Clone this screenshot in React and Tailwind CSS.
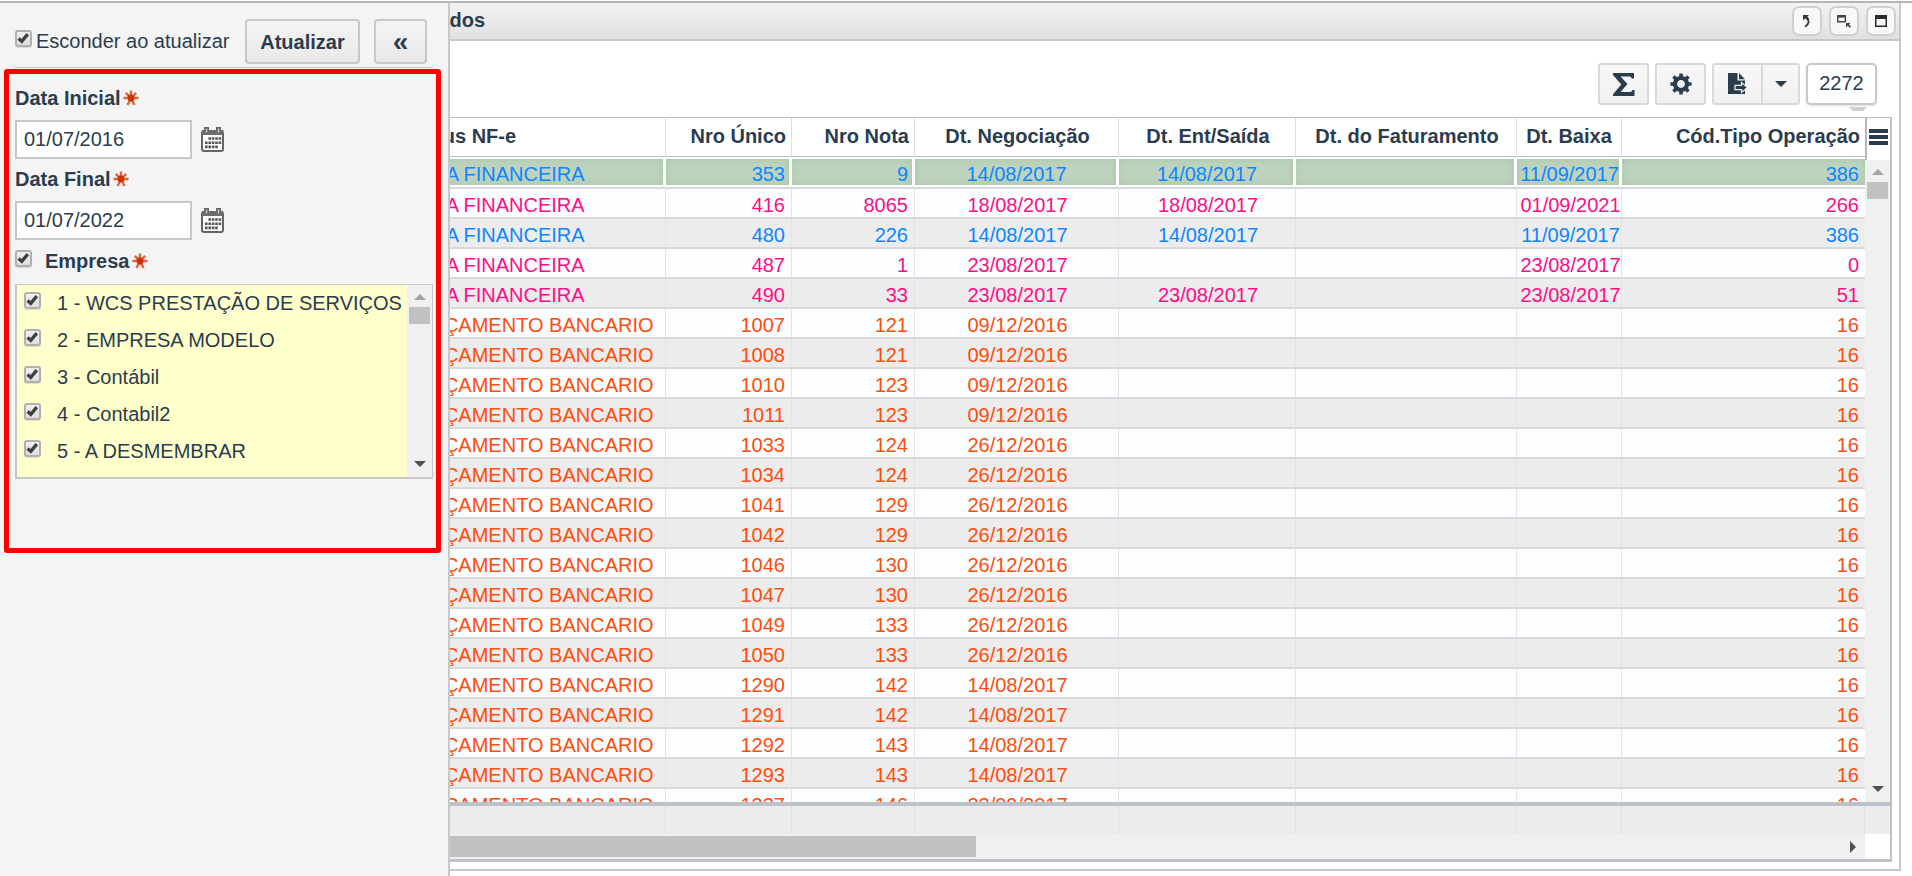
import React from "react";

const TONES = {
  blue: "text-[#0d86ff]",
  pink: "text-[#ff0d86]",
  orange: "text-[#ff4d0d]",
};

const NF = "NOTA FINANCEIRA";
const LB = "LANÇAMENTO BANCARIO";

const ROWS = [
  ["blue", NF, "353", "9", "14/08/2017", "14/08/2017", "", "11/09/2017", "386"],
  ["pink", NF, "416", "8065", "18/08/2017", "18/08/2017", "", "01/09/2021", "266"],
  ["blue", NF, "480", "226", "14/08/2017", "14/08/2017", "", "11/09/2017", "386"],
  ["pink", NF, "487", "1", "23/08/2017", "", "", "23/08/2017", "0"],
  ["pink", NF, "490", "33", "23/08/2017", "23/08/2017", "", "23/08/2017", "51"],
  ["orange", LB, "1007", "121", "09/12/2016", "", "", "", "16"],
  ["orange", LB, "1008", "121", "09/12/2016", "", "", "", "16"],
  ["orange", LB, "1010", "123", "09/12/2016", "", "", "", "16"],
  ["orange", LB, "1011", "123", "09/12/2016", "", "", "", "16"],
  ["orange", LB, "1033", "124", "26/12/2016", "", "", "", "16"],
  ["orange", LB, "1034", "124", "26/12/2016", "", "", "", "16"],
  ["orange", LB, "1041", "129", "26/12/2016", "", "", "", "16"],
  ["orange", LB, "1042", "129", "26/12/2016", "", "", "", "16"],
  ["orange", LB, "1046", "130", "26/12/2016", "", "", "", "16"],
  ["orange", LB, "1047", "130", "26/12/2016", "", "", "", "16"],
  ["orange", LB, "1049", "133", "26/12/2016", "", "", "", "16"],
  ["orange", LB, "1050", "133", "26/12/2016", "", "", "", "16"],
  ["orange", LB, "1290", "142", "14/08/2017", "", "", "", "16"],
  ["orange", LB, "1291", "142", "14/08/2017", "", "", "", "16"],
  ["orange", LB, "1292", "143", "14/08/2017", "", "", "", "16"],
  ["orange", LB, "1293", "143", "14/08/2017", "", "", "", "16"],
  ["orange", LB, "1337", "146", "22/09/2017", "", "", "", "16"],
];

const COLUMNS = [
  { label: "Status NF-e", align: "text-left", head: "pl-[5px]", cell: "pl-[5px]" },
  { label: "Nro Único", align: "text-right", head: "pr-[5px]", cell: "pr-[6px]" },
  { label: "Nro Nota", align: "text-right", head: "pr-[5px]", cell: "pr-[6px]" },
  { label: "Dt. Negociação", align: "text-center", head: "pl-[2px]", cell: "pl-[2px]" },
  { label: "Dt. Ent/Saída", align: "text-center", head: "pl-[2px]", cell: "pl-[2px]" },
  { label: "Dt. do Faturamento", align: "text-center", head: "pl-[2px]", cell: "pl-[2px]" },
  { label: "Dt. Baixa", align: "text-center", head: "pl-0", cell: "pl-[3px]" },
  { label: "Cód.Tipo Operação", align: "text-right", head: "pr-[5px]", cell: "pr-[6px]" },
];

const COMPANIES = [
  "1 - WCS PRESTAÇÃO DE SERVIÇOS",
  "2 - EMPRESA MODELO",
  "3 - Contábil",
  "4 - Contabil2",
  "5 - A DESMEMBRAR",
];

function Check({ id, label }) {
  return (
    <span className="mb-[5px] grid size-[17px] shrink-0">
      <input
        id={id}
        type="checkbox"
        defaultChecked
        aria-label={label}
        className="peer col-start-1 row-start-1 size-[17px] appearance-none rounded-[3px] border-2 border-[#b0b0b0] bg-linear-to-b from-[#f0f0f0] to-[#dedede] shadow-[0_1px_1px_rgba(0,0,0,0.12)]"
      />
      <svg
        viewBox="0 0 17 17"
        className="pointer-events-none invisible col-start-1 row-start-1 size-[17px] peer-checked:visible"
        aria-hidden="true"
      >
        <path d="M3.600 8.400 6.800 11.400 12.800 4.200" fill="none" stroke="#404040" strokeWidth="3.400" />
      </svg>
    </span>
  );
}

function Required() {
  return (
    <svg viewBox="0 0 16 16" className="size-4 shrink-0" aria-hidden="true">
      <g stroke="#e0643f" strokeWidth="2.4">
        <path d="M8 0.5V7M0.5 8H15.5M2.800 2.800 8 8 13.200 2.800M4.500 15 8 8 11.500 15" fill="none" />
      </g>
      <circle cx="8" cy="8" r="3.4" fill="#cc3300" />
    </svg>
  );
}

function CalendarIcon() {
  return (
    <svg viewBox="0 0 23 25" className="h-[25px] w-[23px]" aria-hidden="true">
      <rect x="1" y="4" width="21" height="20" rx="2" fill="#fff" stroke="#666" strokeWidth="2" />
      <path d="M1 3h21v5H1z" fill="#6b6b6b" />
      <path d="M3 0h5v4H3zM15 0h5v4h-5z" fill="#666" />
      <path d="M4.800 1.500h1.400v4H4.800zM16.800 1.500h1.400v4h-1.400z" fill="#ccc" />
      <g stroke="#555" strokeWidth="2.600" strokeDasharray="2.600 0.800">
        <path d="M7.400 11.500h12.800M4 15.700h16.200M4 19.900h12.800" />
      </g>
    </svg>
  );
}

function DateField({ id, label, value }) {
  return (
    <div className="mb-[5px]">
      <div className="flex h-[30px] items-center gap-[2px]">
        <label htmlFor={id} className="font-bold">
          {label}
        </label>
        <Required />
      </div>
      <div className="mt-[7px] flex items-center gap-[9px]">
        <input
          id={id}
          type="text"
          defaultValue={value}
          className="h-[39px] w-[177px] border-2 border-[#c8c8c8] bg-white px-[7px] outline-none"
        />
        <button type="button" aria-label={`Calendário ${label}`}>
          <CalendarIcon />
        </button>
      </div>
    </div>
  );
}

function Arrow({ d, color }) {
  return (
    <svg viewBox="0 0 12 12" className="size-3" aria-hidden="true">
      <path d={d} fill={color} />
    </svg>
  );
}

const UP = "M6 3 12 9H0z";
const DOWN = "M0 3H12L6 9z";
const RIGHT = "M3 0 9 6 3 12z";

function VerticalScroll() {
  return (
    <div className="flex flex-1 flex-col items-center bg-[#f0f0f0] pt-[6px] pb-[7px]">
      <Arrow d={UP} color="#a3a3a3" />
      <div className="mt-1 h-[17px] w-[21px] bg-[#c1c1c1]" />
      <div className="mt-auto">
        <Arrow d={DOWN} color="#505050" />
      </div>
    </div>
  );
}

function Sidebar() {
  return (
    <aside className="flex w-[450px] shrink-0 flex-col border-r-2 border-[#c8c8c8] bg-[#f4f4f4]">
      <div className="mx-[15px] flex h-[65px] items-center border-b border-[#c8c8c8] pt-3">
        <Check id="hide" label="Esconder ao atualizar" />
        <label htmlFor="hide" className="ml-1 whitespace-nowrap">
          Esconder ao atualizar
        </label>
        <button
          type="button"
          className="ml-auto h-[45px] w-[115px] rounded-[4px] border-2 border-[#c8c8c8] bg-linear-to-b from-[#f4f4f4] to-[#e9e9e9] pt-px font-bold"
        >
          Atualizar
        </button>
        <button
          type="button"
          aria-label="Recolher"
          className="ml-[14px] mr-[6px] h-[45px] w-[53px] rounded-[4px] border-2 border-[#c8c8c8] bg-linear-to-b from-[#f4f4f4] to-[#e9e9e9] pt-px text-[28px] font-bold leading-none"
        >
          «
        </button>
      </div>
      <section className="ml-1 mr-[7px] mt-px rounded-[3px] border-5 border-[#ff0000] pb-[69px] pl-[6px] pr-[3px] pt-[9px]">
        <DateField id="start" label="Data Inicial" value="01/07/2016" />
        <DateField id="end" label="Data Final" value="01/07/2022" />
        <div className="flex h-8 items-center">
          <Check id="company" label="Empresa" />
          <label htmlFor="company" className="ml-[13px] mr-[2px] font-bold">
            Empresa
          </label>
          <Required />
        </div>
        <div className="mt-[7px] flex border border-l-2 border-b-2 border-[#c8c8c8] bg-[#ffffcc]">
          <ul className="min-w-0 flex-1 pb-[7px]">
            {COMPANIES.map((name, i) => (
              <li key={name} className="flex h-[37px] items-center pb-[2px] pl-[7px]">
                <Check id={`c${i}`} label={name} />
                <label htmlFor={`c${i}`} className="ml-4 whitespace-nowrap">
                  {name}
                </label>
              </li>
            ))}
          </ul>
          <div className="flex w-[25px] shrink-0 flex-col">
            <VerticalScroll />
          </div>
        </div>
      </section>
    </aside>
  );
}

function WindowButton({ label, children }) {
  return (
    <button
      type="button"
      aria-label={label}
      className="flex size-[30px] items-center justify-center rounded-[7px] border-2 border-[#d0d0d0] bg-[#f8f8f8]"
    >
      {children}
    </button>
  );
}

function TitleBar() {
  return (
    <header className="flex h-[38px] shrink-0 items-center border-b-2 border-[#c8c8c8] bg-linear-to-b from-[#f2f2f2] to-[#e0e0e0] pl-6 pr-[3px]">
      <h1 className="pb-[2px] font-bold">Dados</h1>
      <div className="ml-auto flex gap-[7px]">
        <WindowButton label="Restaurar">
          <svg viewBox="0 0 10 14" className="h-[14px] w-[10px]" aria-hidden="true">
            <path d="M1 1h6L5.200 2.800 7 4.600 5.200 6.200 3.200 4.200 1 6.400z" fill="#333" />
            <path d="M4.500 3.500C7.500 6 7.500 10 3 12.800" fill="none" stroke="#333" strokeWidth="1.800" />
          </svg>
        </WindowButton>
        <WindowButton label="Reduzir">
          <svg viewBox="0 0 14 13" className="h-[13px] w-[14px]" aria-hidden="true">
            <path d="M.7 1.500h7.600v5.200H.7z" fill="none" stroke="#444" strokeWidth="1.400" />
            <path d="M0 0h9v2.500H0z" fill="#444" />
            <path d="M9 8h4.500l-1.500 1.500 2 2-1.200 1.300-2-2L9 12.500z" fill="#444" />
          </svg>
        </WindowButton>
        <WindowButton label="Maximizar">
          <svg viewBox="0 0 12 12" className="size-3" aria-hidden="true">
            <path d="M.75.75h10.500v10.500H.75z" fill="none" stroke="#2b2b2b" strokeWidth="1.500" />
            <path d="M0 0h12v4H0z" fill="#2b2b2b" />
          </svg>
        </WindowButton>
      </div>
    </header>
  );
}

function Toolbar() {
  return (
    <div className="flex h-[76px] shrink-0 justify-end gap-[6px] pr-[22px] pt-[22px]">
      <button
        type="button"
        aria-label="Totais"
        className="flex h-[42px] w-[51px] items-center justify-center rounded-[3px] border-2 border-[#d9d9d9] bg-linear-to-b from-[#f8f8f8] to-[#f0f0f0]"
      >
        <svg viewBox="0 0 22 23" className="h-[23px] w-[22px]" aria-hidden="true">
          <path
            d="M0 0h21v5.500h-2.500c0-1.200-.8-2-2.500-2H7.500l7 7.500-7 8H17c1.500 0 2.200-.8 2.200-2H21.500V23H0v-1.800l8.300-9.700L0 2z"
            fill="#2c3c4f"
          />
        </svg>
      </button>
      <button
        type="button"
        aria-label="Configurações"
        className="flex h-[42px] w-[51px] items-center justify-center rounded-[3px] border-2 border-[#d9d9d9] bg-linear-to-b from-[#f8f8f8] to-[#f0f0f0]"
      >
        <svg viewBox="-11 -11 22 22" className="size-[22px]" aria-hidden="true">
          <circle r="6" fill="none" stroke="#2c3c4f" strokeWidth="4.200" />
          <g fill="#2c3c4f">
            {[0, 45, 90, 135, 180, 225, 270, 315].map((a) => (
              <rect key={a} x="-1.800" y="-10.600" width="3.600" height="4" rx="0.500" transform={`rotate(${a})`} />
            ))}
          </g>
        </svg>
      </button>
      <div className="flex h-[42px] rounded-[3px] border-2 border-[#d9d9d9] bg-linear-to-b from-[#f8f8f8] to-[#f0f0f0]">
        <button
          type="button"
          aria-label="Exportar"
          className="flex w-[49px] items-center justify-center border-r-2 border-[#d9d9d9]"
        >
          <svg viewBox="0 0 20 22" className="h-[22px] w-5" aria-hidden="true">
            <path d="M0 0h9.500v7.500H17V21H0z" fill="#2c3c4f" />
            <path d="M11 0 17 6.200h-6z" fill="#2c3c4f" />
            <path
              d="M7 12.300h6.500V9.500l6 5-6 5v-2.800H7z"
              fill="#2c3c4f"
              stroke="#f4f4f4"
              strokeWidth="1.200"
            />
          </svg>
        </button>
        <button type="button" aria-label="Opções" className="flex w-[35px] items-center justify-center">
          <svg viewBox="0 0 12 6" className="h-[6px] w-3" aria-hidden="true">
            <path d="M0 0h12L6 6z" fill="#2c3c4f" />
          </svg>
        </button>
      </div>
      <div className="relative flex h-[42px] w-[71px] items-center justify-center rounded-[5px] border-2 border-[#c8c8c8] bg-white pb-[2px] shadow-sm">
        2272
        <svg viewBox="0 0 18 4" className="absolute -bottom-2 right-2 h-1 w-[18px]" aria-hidden="true">
          <path d="M0 0h18l-4 4H4z" fill="#cfcfcf" />
        </svg>
      </div>
    </div>
  );
}

function Columns() {
  return (
    <colgroup>
      <col className="w-[266px]" />
      <col className="w-[126px]" />
      <col className="w-[123px]" />
      <col className="w-[204px]" />
      <col className="w-[177px]" />
      <col className="w-[221px]" />
      <col className="w-[105px]" />
      <col />
    </colgroup>
  );
}

function DataGrid() {
  return (
    <div className="mr-[7px] flex min-h-0 flex-1 flex-col border-b-3 border-r-2 border-t border-[#bcc2c7] border-t-[#bbbdc0]">
      <div className="flex min-h-0 flex-1">
        <div className="min-w-0 flex-1 overflow-hidden">
          <table className="w-full table-fixed border-separate border-spacing-0">
            <Columns />
            <thead>
              <tr className="h-[39px]">
                {COLUMNS.map((c) => (
                  <th
                    key={c.label}
                    className={`${c.align} ${c.head} whitespace-nowrap border-b border-r border-b-[#bbbdc0] border-r-[#dcdfe2] pb-[2px] pt-0 font-bold last:border-r-0`}
                  >
                    {c.label}
                  </th>
                ))}
              </tr>
            </thead>
            <tbody>
              {ROWS.map(([tone, ...cells], r) => (
                <tr
                  key={cells[1]}
                  className={`${TONES[tone]} ${r === 0 ? "h-8" : "h-[30px]"} ${r % 2 ? "bg-[#fbfdff]" : r === 0 ? "bg-white" : "bg-[#ececec]"}`}
                >
                  {cells.map((v, i) => (
                    <td
                      key={i}
                      className={`${COLUMNS[i].align} whitespace-nowrap border-b-2 border-[#d7dadd] p-0`}
                    >
                      {r === 0 ? (
                        <div
                          className={`my-[2px] h-[26px] border-white bg-[#bed3be] bg-clip-padding pt-[2px] leading-[26px] shadow-[inset_0_0_10px_#a9c6a9] ${i < 7 ? "border-r-3" : ""} ${COLUMNS[i].align === "text-right" && i < 7 ? "pr-1" : COLUMNS[i].cell}`}
                        >
                          {v}
                        </div>
                      ) : (
                        <div
                          className={`h-7 pt-[3px] leading-[26px] ${COLUMNS[i].cell} ${i < 7 ? "border-r border-[#e2e4e7]" : ""}`}
                        >
                          {v}
                        </div>
                      )}
                    </td>
                  ))}
                </tr>
              ))}
            </tbody>
          </table>
        </div>
        <div className="flex w-[25px] shrink-0 flex-col">
          <button
            type="button"
            aria-label="Colunas"
            className="flex h-[42px] shrink-0 items-center justify-center border-l-2 border-[#b5b9bd] bg-white pb-[4px]"
          >
            <svg viewBox="0 0 19 16" className="h-4 w-[19px]" aria-hidden="true">
              <path d="M0 0h19v4H0zM0 6h19v4H0zM0 12h19v4H0z" fill="#2c3c4f" />
            </svg>
          </button>
          <VerticalScroll />
        </div>
      </div>
      <div className="flex shrink-0 border-t-4 border-[#bcc2c7] bg-[#ececec]">
        <div className="min-w-0 flex-1">
          <table className="w-full table-fixed border-separate border-spacing-0" aria-label="Totais">
            <Columns />
            <tbody>
              <tr className="h-7">
                {COLUMNS.map((c) => (
                  <td key={c.label} className="border-r border-[#e0e2e4] p-0" />
                ))}
              </tr>
            </tbody>
          </table>
        </div>
        <div className="w-[25px] shrink-0" />
      </div>
      <div className="flex h-[25px] shrink-0">
        <div className="flex flex-1 items-center justify-between bg-[#f0f0f0] pr-[6px]">
          <div className="h-[21px] w-[576px] bg-[#c1c1c1]" />
          <Arrow d={RIGHT} color="#505050" />
        </div>
        <div className="w-[25px] shrink-0 bg-white" />
      </div>
    </div>
  );
}

export default function App() {
  return (
    <div className="flex h-screen flex-col overflow-hidden bg-white font-['Liberation_Sans',Arial,sans-serif] text-[20px] leading-7 text-[#2c3c4f]">
      <div className="mt-px h-[2px] shrink-0 bg-[#b5b5b5]" />
      <div className="flex min-h-0 flex-1">
        <Sidebar />
        <main className="mb-[5px] mr-[11px] flex min-w-0 flex-1 overflow-hidden border-b-2 border-r-2 border-[#c8c8c8]">
          <div className="-ml-[50px] flex min-w-0 flex-1 flex-col pb-[7px]">
            <TitleBar />
            <Toolbar />
            <DataGrid />
          </div>
        </main>
      </div>
    </div>
  );
}
